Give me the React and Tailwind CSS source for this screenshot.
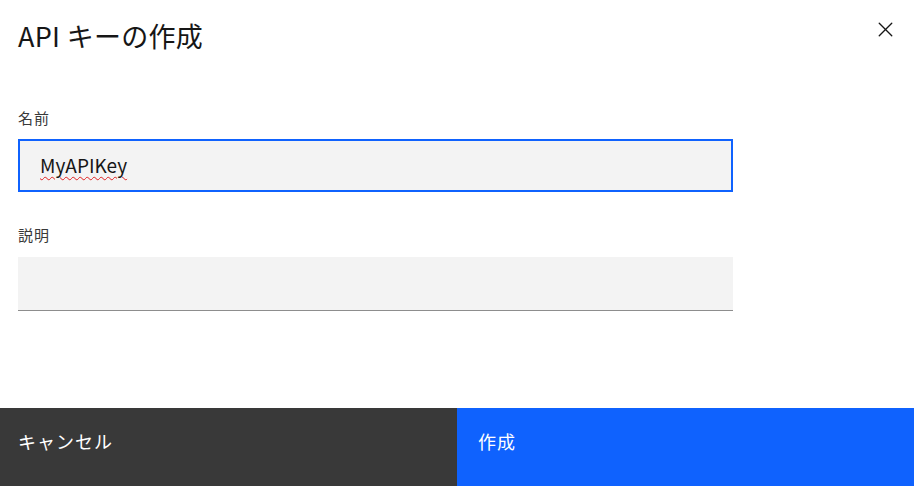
import { X } from 'lucide-react';

export default function App() {
  const font = { fontFamily: '"Noto Sans CJK JP", "Noto Sans", sans-serif' };
  return (
    <div className="w-[914px] h-[486px] bg-white flex flex-col text-[#161616]" style={font}>
      {/* header */}
      <div className="flex justify-between items-start h-[96px]">
        <h2 className="pl-[18px] pt-[17px] text-[27px] leading-[38px] font-normal tracking-[0.3px]">API キーの作成</h2>
        <button className="mt-[14px] mr-[16px] w-[26px] h-[30px] flex items-center justify-center">
          <X size={25} strokeWidth={1.3} className="text-[#161616]" />
        </button>
      </div>

      {/* body */}
      <div className="flex-1 px-[18px] pt-[12px]">
        <label className="block text-[15px] leading-[20px] tracking-[1px] text-[#393939] mb-[11px]">名前</label>
        <div className="w-[715px] h-[53px] bg-[#f3f3f3] border-2 border-[#0f62fe] flex items-center pl-[20px]">
          <span className="text-[19px] underline decoration-wavy decoration-[#e02020] decoration-1 underline-offset-[3px]">
            MyAPIKey
          </span>
        </div>

        <label className="block text-[15px] leading-[20px] tracking-[1px] text-[#393939] mt-[33px] mb-[12px]">説明</label>
        <div className="w-[715px] h-[54px] bg-[#f3f3f3] border-b border-[#8d8d8d]" />
      </div>

      {/* footer */}
      <div className="flex h-[78px]">
        <button className="w-[457px] h-full bg-[#393939] text-white text-[18px] tracking-[1px] text-left pl-[18px] pb-[12px]">
          キャンセル
        </button>
        <button className="flex-1 h-full bg-[#0f62fe] text-white text-[18px] tracking-[1px] text-left pl-[21px] pb-[12px]">
          作成
        </button>
      </div>
    </div>
  );
}
